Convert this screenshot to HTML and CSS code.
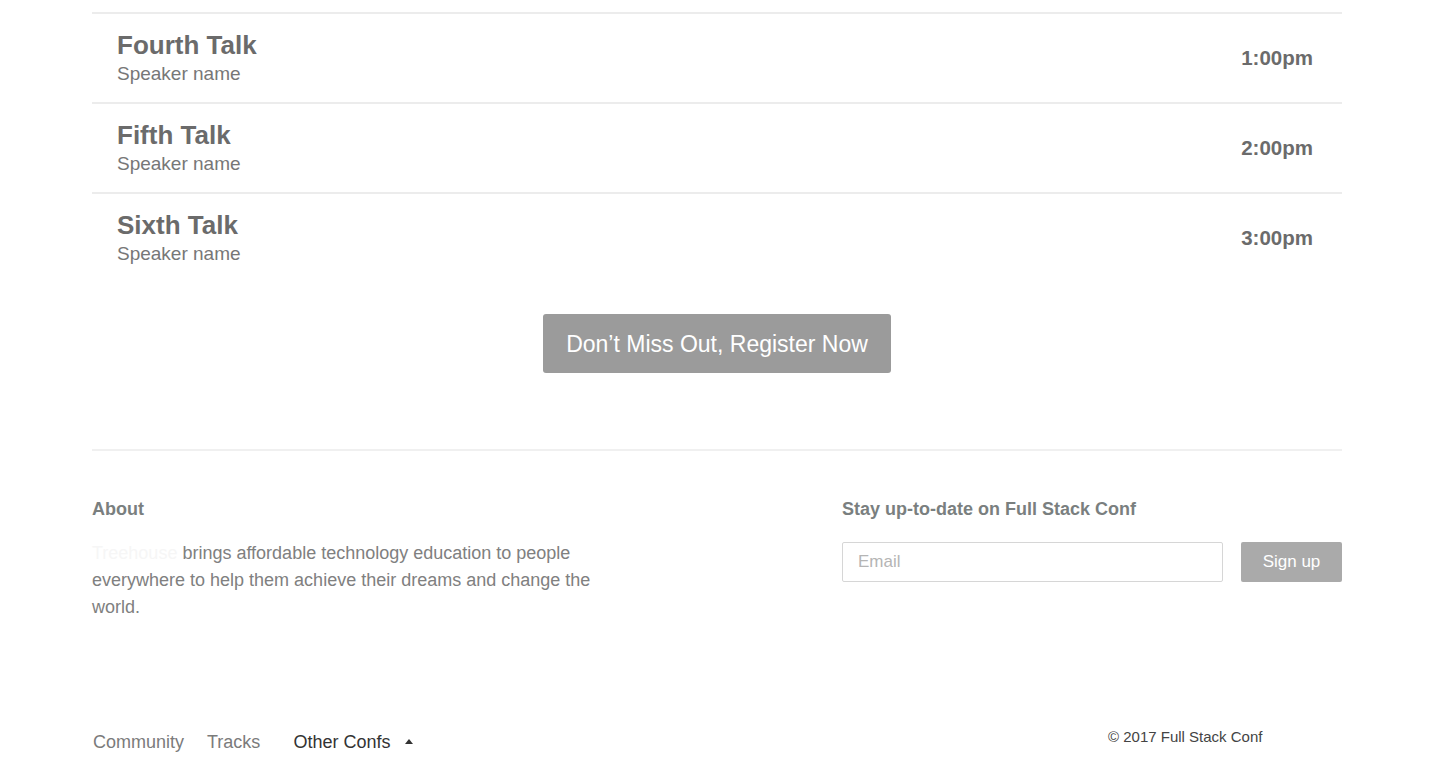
FILE: index.html
```html
<!DOCTYPE html>
<html lang="en">
<head>
<meta charset="utf-8">
<title>Full Stack Conf</title>
<link rel="stylesheet" href="styles.css">
</head>
<body>
<div class="page">
  <ul class="schedule">
    <li class="talk">
      <div class="talk-info">
        <h3 class="talk-title">Fourth Talk</h3>
        <p class="talk-speaker">Speaker name</p>
      </div>
      <span class="talk-time">1:00pm</span>
    </li>
    <li class="talk">
      <div class="talk-info">
        <h3 class="talk-title">Fifth Talk</h3>
        <p class="talk-speaker">Speaker name</p>
      </div>
      <span class="talk-time">2:00pm</span>
    </li>
    <li class="talk talk-last">
      <div class="talk-info">
        <h3 class="talk-title">Sixth Talk</h3>
        <p class="talk-speaker">Speaker name</p>
      </div>
      <span class="talk-time">3:00pm</span>
    </li>
  </ul>
  <div class="cta">
    <a class="cta-button" href="#">Don’t Miss Out, Register Now</a>
  </div>

  <footer class="footer">
    <div class="footer-top">
      <div class="about">
        <h4 class="footer-heading">About</h4>
        <p class="about-text"><span class="blurred">Treehouse</span> brings affordable technology education to people everywhere to help them achieve their dreams and change the world.</p>
      </div>
      <div class="newsletter">
        <h4 class="footer-heading">Stay up-to-date on Full Stack Conf</h4>
        <form class="signup">
          <input class="email" type="text" placeholder="Email">
          <button class="signup-btn" type="button">Sign up</button>
        </form>
      </div>
    </div>
    <div class="footer-bottom">
      <nav class="footer-nav">
        <a href="#">Community</a>
        <a href="#">Tracks</a>
        <a href="#" class="active">Other Confs <span class="caret"></span></a>
      </nav>
      <p class="copyright">© 2017 Full Stack Conf</p>
    </div>
  </footer>
</div>
</body>
</html>
```

FILE: styles.css
```css
* { box-sizing: border-box; }

body {
  margin: 0;
  background: #fff;
  font-family: "Liberation Sans", Arial, sans-serif;
  color: #666;
}

.page {
  width: 1250px;
  margin: 0 auto;
}

.schedule {
  list-style: none;
  margin: 0;
  padding: 12px 0 0;
}

.talk {
  display: flex;
  align-items: center;
  justify-content: space-between;
  height: 90px;
  border-top: 2px solid #ececec;
  padding: 0 29px 0 25px;
}

.talk-info {
  padding-top: 3px;
}

.talk-title {
  margin: 0;
  font-size: 26px;
  line-height: 28px;
  font-weight: bold;
  color: #6b6b6b;
}

.talk-speaker {
  margin: 0;
  font-size: 19px;
  line-height: 30px;
  color: #777;
}

.talk-time {
  font-size: 20.5px;
  font-weight: bold;
  color: #6b6b6b;
}

.cta {
  display: flex;
  justify-content: center;
  padding: 32px 0 76px;
}

.cta-button {
  display: block;
  width: 348px;
  height: 59px;
  line-height: 61px;
  text-align: center;
  background: #9b9b9b;
  color: #fff;
  font-size: 23px;
  text-decoration: none;
  border-radius: 3px;
}

.footer {
  border-top: 2px solid #f0f0f0;
  padding-top: 46px;
}

.footer-top {
  display: grid;
  grid-template-columns: 750px 1fr;
}

.footer-heading {
  margin: 0;
  font-size: 18px;
  line-height: 24px;
  font-weight: bold;
  color: #7a7f7f;
}

.about-text {
  margin: 19px 0 0;
  width: 520px;
  font-size: 18px;
  line-height: 27px;
  color: #808080;
}

.blurred {
  color: #f6f6f6;
}

.signup {
  display: flex;
  gap: 18px;
  margin-top: 21px;
}

.email {
  width: 381px;
  height: 40px;
  border: 1px solid #d6d6d6;
  border-radius: 2px;
  padding: 0 15px;
  font-family: inherit;
  font-size: 17px;
  color: #666;
}

.email::placeholder {
  color: #b5b5b5;
}

.signup-btn {
  width: 101px;
  height: 40px;
  border: none;
  border-radius: 2px;
  background: #aaa;
  color: #fff;
  font-family: inherit;
  font-size: 17px;
}

.footer-bottom {
  display: flex;
  justify-content: space-between;
  align-items: flex-start;
  margin-top: 109px;
}

.footer-nav {
  display: flex;
  gap: 23px;
  padding-left: 1px;
}

.footer-nav a {
  font-size: 18px;
  line-height: 24px;
  color: #7b7b7b;
  text-decoration: none;
}

.footer-nav a.active {
  color: #333;
  margin-left: 10px;
}

.caret {
  display: inline-block;
  width: 0;
  height: 0;
  margin-left: 10px;
  vertical-align: 4px;
  border-left: 4px solid transparent;
  border-right: 4px solid transparent;
  border-bottom: 5px solid #333;
}

.copyright {
  margin: -5px 0 0;
  width: 234px;
  font-size: 15px;
  line-height: 24px;
  color: #444;
}
```
